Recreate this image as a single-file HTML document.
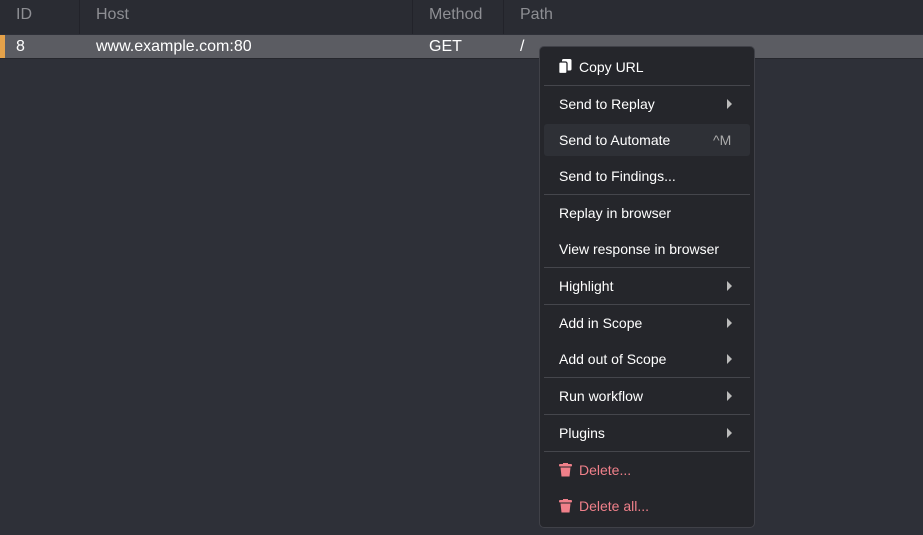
<!DOCTYPE html><html><head><style>
body{margin:0;width:923px;height:535px;background:#2e3038;font-family:"Liberation Sans",sans-serif;font-size:14px;position:relative;overflow:hidden}
.hd{position:absolute;top:0;left:0;width:923px;height:34px;background:#2a2c33;color:#8e8f94;font-size:16px}
.hd div{position:absolute;top:0;height:34px;line-height:30px;border-right:1px solid #22232a}
.row{position:absolute;top:35px;left:0;width:923px;height:23px;background:#5b5c62;color:#fff;font-size:16px;line-height:23px;border-bottom:1px solid #26272d}
.row span{position:absolute;top:0}
.m{position:absolute;left:539px;top:46px;width:214px;height:480px;background:#25262b;border:1px solid #404148;border-radius:5px}
.i{position:absolute;left:19px;color:#fff;font-size:14px;line-height:16px}
.s{position:absolute;left:4px;right:4px;height:1px;background:#45464c}
.a{position:absolute;right:22px;width:0;height:0;border-left:5px solid #bbb;border-top:5px solid transparent;border-bottom:5px solid transparent}
.d{color:#f0808a}
</style></head><body>
<div class="hd">
<div style="left:0;width:79px"><span style="margin-left:16px">ID</span></div>
<div style="left:80px;width:332px"><span style="margin-left:16px">Host</span></div>
<div style="left:413px;width:90px"><span style="margin-left:16px">Method</span></div>
<div style="left:504px;border:0"><span style="margin-left:16px">Path</span></div>
</div>
<div class="row"><div style="position:absolute;left:0;top:0;width:5px;height:23px;background:#e5a24a"></div>
<span style="left:16px">8</span><span style="left:96px">www.example.com:80</span><span style="left:429px">GET</span><span style="left:520px">/</span></div>
<div class="m">
<svg style="position:absolute;left:18px;top:12px" width="14" height="15" viewBox="0 0 14 15"><rect x="4" y="0" width="9.5" height="11.5" rx="1.5" fill="#fff"/><rect x="0.7" y="3" width="8.3" height="11.5" rx="1.5" fill="#fff" stroke="#25262b" stroke-width="1.3"/></svg>
<div class="i" style="left:39px;top:12px">Copy URL</div>
<div class="s" style="top:38px"></div>
<div class="i" style="top:49px">Send to Replay</div><div class="a" style="top:52px"></div>
<div style="position:absolute;left:4px;right:4px;top:77px;height:32px;background:#2e3036;border-radius:3px"></div>
<div class="i" style="top:85px">Send to Automate</div><div class="i" style="left:173px;top:85px;color:#aaa">^M</div>
<div class="i" style="top:121px">Send to Findings...</div>
<div class="s" style="top:147px"></div>
<div class="i" style="top:158px">Replay in browser</div>
<div class="i" style="top:194px">View response in browser</div>
<div class="s" style="top:220px"></div>
<div class="i" style="top:231px">Highlight</div><div class="a" style="top:234px"></div>
<div class="s" style="top:257px"></div>
<div class="i" style="top:268px">Add in Scope</div><div class="a" style="top:271px"></div>
<div class="i" style="top:304px">Add out of Scope</div><div class="a" style="top:307px"></div>
<div class="s" style="top:330px"></div>
<div class="i" style="top:341px">Run workflow</div><div class="a" style="top:344px"></div>
<div class="s" style="top:367px"></div>
<div class="i" style="top:378px">Plugins</div><div class="a" style="top:381px"></div>
<div class="s" style="top:404px"></div>
<svg style="position:absolute;left:19px;top:416px" width="13" height="14" viewBox="0 0 13 14"><rect x="0" y="1" width="13" height="2.5" rx="1" fill="#f0808a"/><rect x="4" y="0" width="5" height="2" fill="#f0808a"/><path d="M1.5 4.5h10l-1 9h-8z" fill="#f0808a"/></svg>
<div class="i d" style="left:39px;top:415px">Delete...</div>
<svg style="position:absolute;left:19px;top:452px" width="13" height="14" viewBox="0 0 13 14"><rect x="0" y="1" width="13" height="2.5" rx="1" fill="#f0808a"/><rect x="4" y="0" width="5" height="2" fill="#f0808a"/><path d="M1.5 4.5h10l-1 9h-8z" fill="#f0808a"/></svg>
<div class="i d" style="left:39px;top:451px">Delete all...</div>
</div>
</body></html>
